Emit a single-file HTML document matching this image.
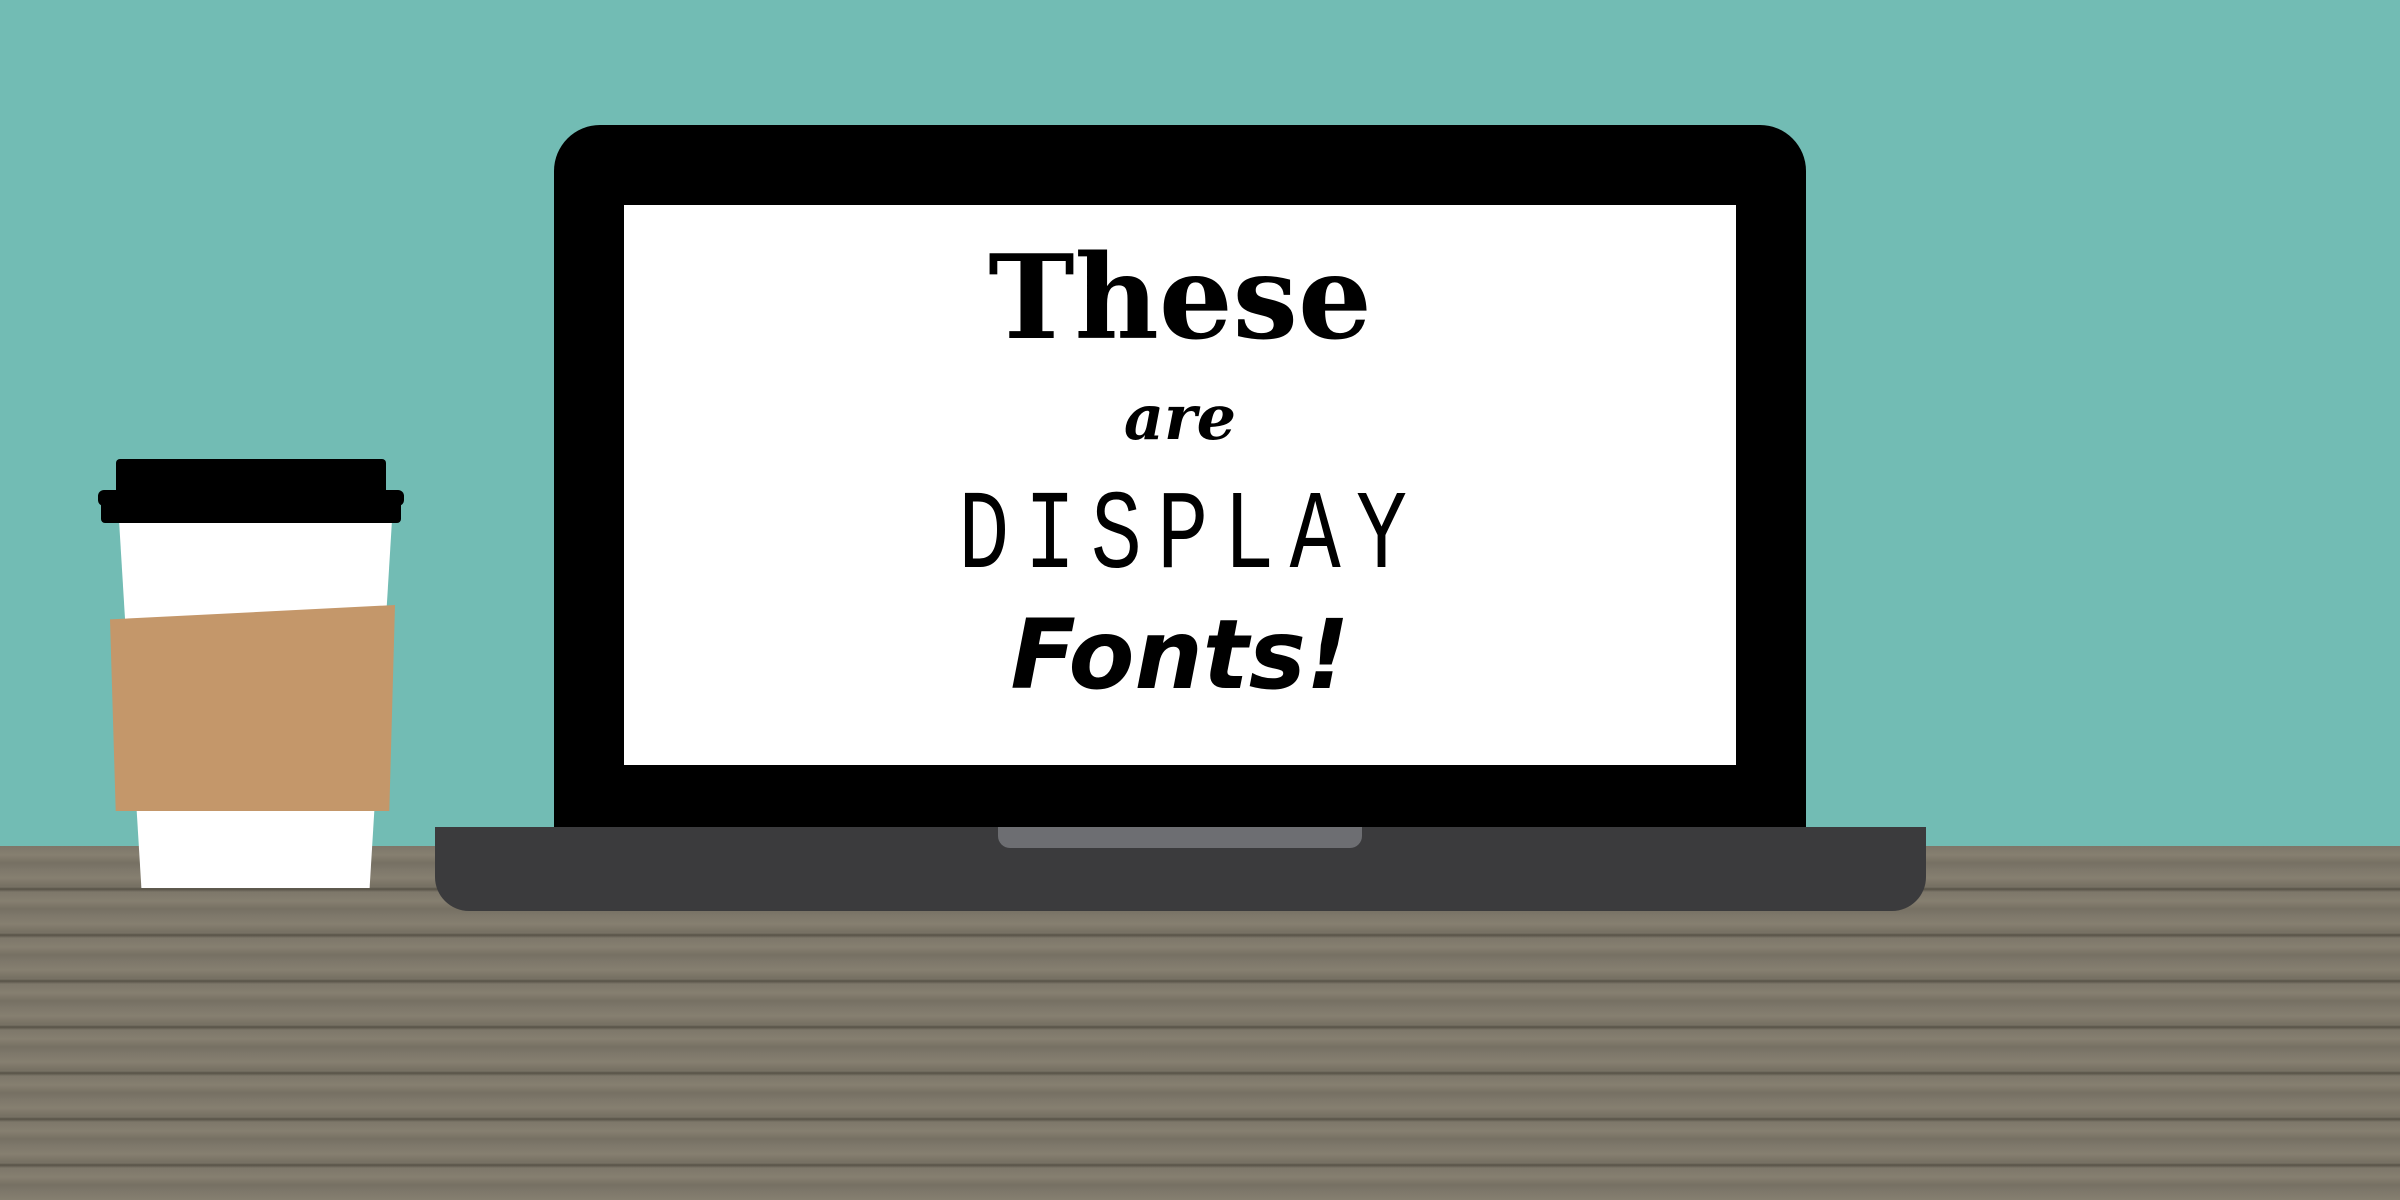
<!DOCTYPE html>
<html><head><style>
html,body{margin:0;padding:0}
body{width:2400px;height:1200px;position:relative;overflow:hidden;background:#72bcb4;font-family:"Liberation Sans",sans-serif}
.wood{position:absolute;left:0;top:846px;width:2400px;height:354px;background:
repeating-linear-gradient(180deg,rgba(40,38,30,0) 0px,rgba(40,38,30,0) 41px,rgba(45,42,33,.45) 43px,rgba(45,42,33,0) 46px),
repeating-linear-gradient(180deg,rgba(160,152,130,0) 0px,rgba(160,152,130,.25) 9px,rgba(90,84,70,.2) 17px,rgba(160,152,130,0) 23px),
#7d776a}
.abs{position:absolute}
.t{position:absolute;left:624px;width:1112px;text-align:center;color:#000}
</style></head><body>
<div class="wood"></div>
<!-- cup -->
<div class="abs" style="left:119px;top:520px;width:273px;height:368px;background:#fff;clip-path:polygon(0 0,100% 0,91.8% 100%,8.2% 100%)"></div>
<div class="abs" style="left:116px;top:459px;width:270px;height:34px;background:#000;border-radius:4px 4px 0 0"></div>
<div class="abs" style="left:98px;top:490px;width:306px;height:16px;background:#000;border-radius:6px"></div>
<div class="abs" style="left:101px;top:505px;width:300px;height:18px;background:#000;border-radius:0 0 4px 4px"></div>
<div class="abs" style="left:110px;top:605px;width:285px;height:206px;background:#c4976a;clip-path:polygon(0 7%,100% 0,98% 100%,2% 100%)"></div>
<!-- laptop -->
<div class="abs" style="left:554px;top:125px;width:1252px;height:710px;background:#000;border-radius:46px 46px 0 0"></div>
<div class="abs" style="left:624px;top:205px;width:1112px;height:560px;background:#fff"></div>
<div class="abs" style="left:435px;top:827px;width:1491px;height:84px;background:#3b3b3d;border-radius:0 0 34px 34px"></div>
<div class="abs" style="left:998px;top:827px;width:364px;height:21px;background:#6d6e72;border-radius:0 0 12px 12px"></div>
<div class="t" style="top:228px;font-family:'DejaVu Serif',serif;font-weight:bold;font-size:116px;line-height:140px;letter-spacing:0px">These</div>
<div class="t" style="top:378px;font-family:'DejaVu Serif',serif;font-style:italic;font-weight:bold;font-size:62px;line-height:80px">are</div>
<div class="t" style="top:482px;font-family:'Liberation Mono',monospace;font-size:112px;line-height:112px"><span style="display:inline-block;transform:scaleX(.76);letter-spacing:20px;margin-right:-20px">DISPLAY</span></div>
<div class="t" style="top:595px;font-family:'DejaVu Sans',sans-serif;font-style:italic;font-weight:bold;font-size:96px;line-height:120px">Fonts!</div>
</body></html>
